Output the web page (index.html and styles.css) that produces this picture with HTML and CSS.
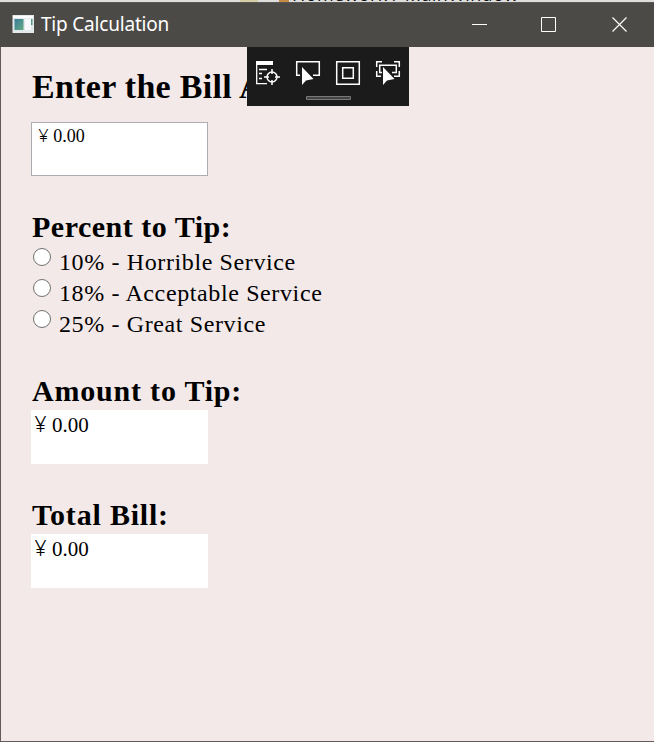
FILE: index.html
```html
<!DOCTYPE html>
<html lang="en">
<head>
<meta charset="utf-8">
<title>Tip Calculation</title>
<link rel="stylesheet" href="styles.css">
</head>
<body>
<div class="backdrop"><i class="tab-yellow"></i><i class="tab-orange"></i><span class="backdrop-title">Homework / MainWindow</span></div>
<div class="window">
  <header class="titlebar">
    <svg class="app-icon" width="22" height="18" viewBox="0 0 22 18"><defs><linearGradient id="g" x2="1" y2="1"><stop stop-color="#397b98"/><stop offset="1" stop-color="#63ab86"/></linearGradient></defs><path fill="#e3e8eb" d="M0.500 0h21.500v18H0.500z"/><path fill="#fff" d="M1 1h20v2H1z"/><path fill="url(#g)" d="M2.500 4h9v11h-9z"/><path fill="#f7f9fa" d="M13 4h6v11h-6z"/><path fill="#57938a" d="M19 4h1.500v6H19z"/></svg>
    <span class="title">Tip Calculation</span>
    <svg class="controls" width="156" height="16" viewBox="0 0 156 16" fill="none" stroke="#fff"><path d="M0 8.500h15M69.500 1.500h14v14h-14z"/><path d="M140.500 1.500l14 14M154.500 1.500l-14 14" stroke-width="1.200"/></svg>
  </header>
  <main class="content">
    <h1 class="heading heading-bill">Enter the Bill A</h1>
    <div class="box box-input"><span class="yen">¥</span>0.00</div>
    <h2 class="heading heading-percent">Percent to Tip:</h2>
    <div class="options">
      <label class="option"><i class="radio"></i><span class="option-text">10% - Horrible Service</span></label>
      <label class="option"><i class="radio"></i><span class="option-text">18% - Acceptable Service</span></label>
      <label class="option"><i class="radio"></i><span class="option-text">25% - Great Service</span></label>
    </div>
    <h2 class="heading heading-amount">Amount to Tip:</h2>
    <div class="box"><span class="yen">¥</span>0.00</div>
    <h2 class="heading heading-total">Total Bill:</h2>
    <div class="box"><span class="yen">¥</span>0.00</div>
  </main>
  <div class="toolbar">
    <svg width="162" height="59" viewBox="0 0 162 59" fill="none" stroke="#fff" stroke-width="1.500">
      <path d="M9 14h17v4H9z" fill="#fff" stroke="none"/>
      <path d="M9.700 17v19.700H20M12 22.500h8M12 26.500h3M12 31.500h3" stroke-width="1.300"/>
      <circle cx="25" cy="30" r="5"/><path d="M25 22v5M25 33v5M17 30h5M28 30h5"/>
      <path d="M53 28.300h-3.300V14.700h22.600v13.600H66"/>
      <path d="M55 20v18l4-4.500 7.500-1.500z" fill="#fff" stroke="none"/>
      <path d="M89.700 14.700h22.600v22.600H89.700zM95.700 20.700h10.600v10.600H95.700z"/>
      <path d="M129.700 20v-5.300H135M147 14.700h5.300V20M152.300 24v5.300H147M129.700 24v5.300H134M135 25.500h-2.300V18.300h16.600v7.200H145"/>
      <path d="M136 20v18l4-4.500 7.500-1.500z" fill="#fff" stroke="none"/>
      <path d="M59.500 49.500h44v3h-44z" stroke="#777" fill="#444" stroke-width="1"/>
    </svg>
  </div>
</div>
</body>
</html>
```
FILE: styles.css
```css
* { box-sizing: border-box; }
body { margin: 0; width: 654px; height: 742px; overflow: hidden; }
.backdrop { position: relative; height: 2px; overflow: hidden; background: #dededd; }
.backdrop-title { position: absolute; left: 292px; top: -17px; font: 18px/22px "Open Sans", sans-serif; letter-spacing: .4px; color: #111; white-space: nowrap; }
.tab-yellow, .tab-orange { position: absolute; top: 0; height: 2px; }
.tab-yellow { left: 240px; width: 18px; background: #d4cfa5; }
.tab-orange { left: 279px; width: 10px; background: #c58b44; }
.window { position: relative; height: 740px; background: #f3e9e8; border: solid #625b5a; border-width: 0 0 1px 1px; }
.titlebar { display: flex; align-items: center; height: 45px; margin-left: -1px; padding: 0 26px 2px 12px; background: #4c4a47; border-top: 1px solid #5a5856; }
.title { margin-left: 7px; font: 19px/24px "Noto Sans", sans-serif; letter-spacing: -.2px; color: #fff; white-space: nowrap; }
.controls { margin-left: auto; }
.content { display: flex; flex-direction: column; padding: 20px 0 0 30px; font-family: "Liberation Serif", serif; color: #000; }
.heading { margin: 0 0 0 1px; font-weight: bold; font-size: 30px; line-height: 36px; letter-spacing: .8px; white-space: nowrap; }
.heading-bill { font-size: 34px; line-height: 40px; letter-spacing: .3px; margin-bottom: 15px; }
.heading-percent { margin-top: 33px; letter-spacing: .5px; }
.heading-amount { margin-top: 35px; margin-bottom: 1px; }
.heading-total { margin-top: 33px; margin-bottom: 1px; }
.box { width: 177px; height: 54px; padding: 3px 0 0 2px; background: #fff; font-size: 21px; line-height: 25px; white-space: nowrap; }
.box-input { padding: 1px 0 0 5px; border: 1px solid #abadb3; font-size: 18px; line-height: 24px; }
.yen { display: inline-block; width: .9em; padding-left: .07em; font-family: "Noto Sans", sans-serif; font-weight: 300; line-height: 1; }
.options { display: grid; grid-auto-rows: 31px; }
.option { display: flex; align-items: center; font-size: 24px; line-height: 31px; white-space: nowrap; }
.option-text { padding-top: 3px; letter-spacing: .62px; }
.radio { width: 18px; height: 18px; margin: 0 8px 7px 2px; border: 1px solid #707070; border-radius: 50%; background: #fff; }
.toolbar { position: absolute; left: 246px; top: 45px; width: 162px; height: 59px; background: #1b1b1c; }
.toolbar svg { display: block; }
```
